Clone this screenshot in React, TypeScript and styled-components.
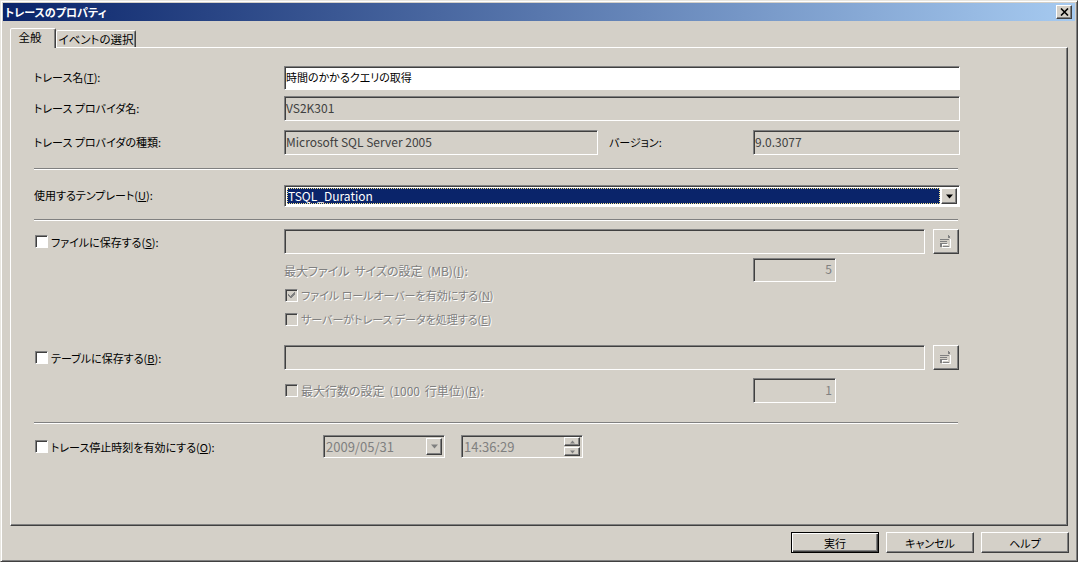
import React from "react";
import styled, { createGlobalStyle, css } from "styled-components";

const Global = createGlobalStyle`
  html, body { margin: 0; padding: 0; background: #d4d0c8; overflow: hidden; }
  body { font-family: "Noto Sans CJK JP", "Liberation Sans", sans-serif; font-size: 11px; color: #000; font-feature-settings: "palt"; }
`;

const raised = css`
  background: #d4d0c8;
  border-style: solid;
  border-width: 1px;
  border-color: #fff #404040 #404040 #fff;
  box-shadow: inset -1px -1px 0 #808080;
`;

const sunken = css`
  box-sizing: border-box;
  border-style: solid;
  border-width: 1px;
  border-color: #808080 #fff #fff #808080;
  box-shadow: inset 1px 1px 0 #404040;
`;

const Window = styled.div`
  box-sizing: border-box;
  width: 1078px;
  height: 562px;
  display: flex;
  flex-direction: column;
  padding: 2px 2px 1px 2px;
  background: #d4d0c8;
  border-style: solid;
  border-width: 1px;
  border-color: #e8e6e0 #404040 #404040 #e8e6e0;
  box-shadow: inset 1px 1px 0 #fff, inset -1px -1px 0 #808080;
`;

const TitleBar = styled.div`
  height: 18px;
  display: flex;
  align-items: center;
  justify-content: space-between;
  padding: 0 3px 0 2px;
  background: linear-gradient(90deg, #0a246a, #a6caf0);
  color: #fff;
  font-weight: 700;
  font-size: 11px;
  flex: none;
`;

const CloseButton = styled.div`
  ${raised}
  box-sizing: border-box;
  width: 16px;
  height: 14px;
  display: flex;
  align-items: center;
  justify-content: center;
  svg { display: block; }
`;

const Body = styled.div`
  flex: 1;
  display: flex;
  flex-direction: column;
  padding: 6px 6px 0 7px;
  min-height: 0;
`;

const TabStrip = styled.div`
  height: 20px;
  display: flex;
  align-items: flex-end;
  flex: none;
  position: relative;
  z-index: 1;
`;

const Tab = styled.div<{ $active?: boolean }>`
  box-sizing: border-box;
  display: flex;
  align-items: center;
  justify-content: center;
  white-space: nowrap;
  font-size: 11.5px;
  background: #d4d0c8;
  border-style: solid;
  border-color: #fff #404040 transparent #fff;
  border-width: 1px 1px 0 1px;
  border-radius: 2px 2px 0 0;
  box-shadow: inset -1px 0 0 #808080;
  width: ${(p) => (p.$active ? "46px" : "80px")};
  height: ${(p) => (p.$active ? "20px" : "17px")};
  margin-bottom: ${(p) => (p.$active ? "-1px" : "0")};
  padding: ${(p) => (p.$active ? "0 6px 3px 0" : "0")};
`;

const Panel = styled.div`
  box-sizing: border-box;
  height: 479px;
  width: 1058px;
  flex: none;
  padding: 18px 0 0 23px;
  border-style: solid;
  border-width: 1px;
  border-color: #fff #404040 #404040 #fff;
  box-shadow: inset -1px -1px 0 #808080;
`;

const Row = styled.div<{ $h: number; $top: number; $indent?: number }>`
  display: flex;
  align-items: center;
  height: ${(p) => p.$h}px;
  margin-top: ${(p) => p.$top}px;
  padding-left: ${(p) => p.$indent ?? 0}px;
`;

const Label = styled.span`
  width: 250px;
  flex: none;
  white-space: nowrap;
  position: relative;
  top: -1px;
`;

const CheckRowLabel = styled.label<{ $w?: number }>`
  width: ${(p) => p.$w ?? 250}px;
  flex: none;
  display: flex;
  align-items: center;
  gap: 3px;
  white-space: nowrap;
`;

const Box = styled.span<{ $disabled?: boolean }>`
  ${sunken}
  width: 13px;
  height: 13px;
  flex: none;
  margin-left: 1px;
  background: ${(p) => (p.$disabled ? "#d4d0c8" : "#fff")};
  display: flex;
  align-items: center;
  justify-content: center;
`;

const Field = styled.div<{ $w: number; $h?: number; $white?: boolean }>`
  ${sunken}
  width: ${(p) => p.$w}px;
  height: ${(p) => p.$h ?? 25}px;
  flex: none;
  padding: 2px 2px 5px 1px;
  display: flex;
  align-items: center;
  font-size: ${(p) => (p.$white ? "11px" : "12px")};
  background: ${(p) => (p.$white ? "#fff" : "#d4d0c8")};
  color: ${(p) => (p.$white ? "#000" : "#404040")};
  white-space: nowrap;
  overflow: hidden;
`;

const NumberField = styled(Field)`
  justify-content: flex-end;
  padding: 0 3px 3px 0;
  color: #808080;
`;

const Rule = styled.div<{ $top: number }>`
  height: 1px;
  width: 924px;
  margin-top: ${(p) => p.$top}px;
  background: #808080;
  border-bottom: 1px solid #fff;
`;

const SelectField = styled.div`
  ${sunken}
  width: 676px;
  height: 22px;
  flex: none;
  background: #fff;
  display: flex;
  padding: 2px;
  gap: 1px;
`;

const SelectedValue = styled.div`
  flex: 1;
  background: #0a246a;
  color: #fff;
  font-size: 12px;
  outline: 1px dotted #f6e58d;
  outline-offset: -1px;
  padding: 0 0 1px 1px;
  display: flex;
  align-items: center;
`;

const ArrowButton = styled.div`
  ${raised}
  box-sizing: border-box;
  width: 16px;
  flex: none;
  display: flex;
  align-items: center;
  justify-content: center;
`;

const DisabledText = styled.span`
  color: #808080;
  text-shadow: 1px 1px 0 #fff;
  white-space: nowrap;
`;

const LatinDisabledText = styled(DisabledText)`
  font-size: 12px;
  word-spacing: 2px;
`;

const IndentedLabel = styled(LatinDisabledText)`
  width: 469px;
  flex: none;
`;

const Gap = styled.span`
  width: 11px;
  flex: none;
`;

const VersionLabel = styled.span`
  width: 144px;
  flex: none;
  white-space: nowrap;
  position: relative;
  top: -1px;
`;

const BrowseButton = styled.div`
  ${raised}
  box-sizing: border-box;
  width: 26px;
  height: 25px;
  margin-left: 8px;
  flex: none;
  display: flex;
  align-items: center;
  justify-content: center;
`;

const Combo = styled.div`
  ${sunken}
  width: 122px;
  height: 23px;
  margin-left: 39px;
  flex: none;
  display: flex;
  align-items: center;
  justify-content: space-between;
  padding: 2px;
  color: #808080;
  font-size: 13px;
`;

const ComboArrow = styled(ArrowButton)`
  height: 17px;
`;

const TimeField = styled(Combo)`
  margin-left: 16px;
`;

const Spinner = styled.div`
  width: 16px;
  display: flex;
  flex-direction: column;
  gap: 1px;
`;

const SpinButton = styled.div`
  ${raised}
  box-sizing: border-box;
  height: 9px;
  display: flex;
  align-items: center;
  justify-content: center;
`;

const Footer = styled.div`
  display: flex;
  justify-content: flex-end;
  gap: 7px;
  padding: 6px 0 0 0;
`;

const DialogButton = styled.div<{ $default?: boolean }>`
  box-sizing: border-box;
  width: 88px;
  height: 21px;
  display: flex;
  align-items: center;
  justify-content: center;
  background: #d4d0c8;
  border-style: solid;
  border-width: 1px;
  border-color: ${(p) => (p.$default ? "#000" : "#fff #404040 #404040 #fff")};
  box-shadow: ${(p) =>
    p.$default
      ? "inset 1px 1px 0 #fff, inset -1px -1px 0 #404040, inset -2px -2px 0 #808080"
      : "inset -1px -1px 0 #808080"};
`;

const Tri = ({ dir, color = "#000", size = 7 }: { dir: "up" | "down"; color?: string; size?: number }) => (
  <svg width={size} height={Math.ceil(size / 2) + 1} viewBox="0 0 7 4">
    <polygon points={dir === "down" ? "0,0 7,0 3.5,4" : "0,4 7,4 3.5,0"} fill={color} />
  </svg>
);

const BrowseIcon = () => (
  <svg width="12" height="14" viewBox="0 0 12 14" shapeRendering="crispEdges">
    <path d="M8 0h1v1h1v2H8z" fill="#808080" />
    <path d="M0 4h9v1H0zM0 6h7v1H0zM0 8h2v4H0zM2 8h5v1H2zM3 11h6v1H3z" fill="#808080" />
    <path d="M10 4h1v9H2v-1h8zM2 9h6v1H3v1H2z" fill="#fff" />
  </svg>
);

const Check = () => (
  <svg width="9" height="9" viewBox="0 0 9 9" shapeRendering="crispEdges">
    <path d="M1 3h1v1h1v1h1V4h1V3h1V2h1V1h1v3H7v1H6v1H5v1H3V6H2V5H1z" fill="#808080" />
  </svg>
);

const U = styled.span`
  text-decoration: underline;
`;

export default function App() {
  return (
    <Window>
      <Global />
      <TitleBar>
        <span>トレースのプロパティ</span>
        <CloseButton>
          <svg width="9" height="8" viewBox="0 0 9 8">
            <path d="M1 0.5L8 7.5M8 0.5L1 7.5" stroke="#000" strokeWidth="1.6" />
          </svg>
        </CloseButton>
      </TitleBar>
      <Body>
        <TabStrip>
          <Tab $active>全般</Tab>
          <Tab>イベントの選択</Tab>
        </TabStrip>
        <Panel>
          <Row $h={24} $top={0}>
            <Label>トレース名(<U>T</U>):</Label>
            <Field $w={676} $h={24} $white>時間のかかるクエリの取得</Field>
          </Row>
          <Row $h={25} $top={6}>
            <Label>トレース プロバイダ名:</Label>
            <Field $w={676}>VS2K301</Field>
          </Row>
          <Row $h={25} $top={9}>
            <Label>トレース プロバイダの種類:</Label>
            <Field $w={314}>Microsoft SQL Server 2005</Field>
            <Gap />
            <VersionLabel>バージョン:</VersionLabel>
            <Field $w={207}>9.0.3077</Field>
          </Row>
          <Rule $top={13} />
          <Row $h={22} $top={15}>
            <Label>使用するテンプレート(<U>U</U>):</Label>
            <SelectField>
              <SelectedValue>TSQL_Duration</SelectedValue>
              <ArrowButton><Tri dir="down" /></ArrowButton>
            </SelectField>
          </Row>
          <Rule $top={12} />
          <Row $h={25} $top={8}>
            <CheckRowLabel><Box /><span>ファイルに保存する(<U>S</U>):</span></CheckRowLabel>
            <Field $w={641} />
            <BrowseButton><BrowseIcon /></BrowseButton>
          </Row>
          <Row $h={24} $top={4} $indent={250}>
            <IndentedLabel>最大ファイル サイズの設定 (MB)(<U>I</U>):</IndentedLabel>
            <NumberField $w={83} $h={24}>5</NumberField>
          </Row>
          <Row $h={16} $top={5} $indent={250}>
            <CheckRowLabel>
              <Box $disabled><Check /></Box>
              <DisabledText>ファイル ロールオーバーを有効にする(<U>N</U>)</DisabledText>
            </CheckRowLabel>
          </Row>
          <Row $h={16} $top={8} $indent={250}>
            <CheckRowLabel>
              <Box $disabled />
              <DisabledText>サーバーがトレース データを処理する(<U>E</U>)</DisabledText>
            </CheckRowLabel>
          </Row>
          <Row $h={25} $top={18}>
            <CheckRowLabel><Box /><span>テーブルに保存する(<U>B</U>):</span></CheckRowLabel>
            <Field $w={641} />
            <BrowseButton><BrowseIcon /></BrowseButton>
          </Row>
          <Row $h={25} $top={8} $indent={250}>
            <CheckRowLabel $w={469}>
              <Box $disabled />
              <LatinDisabledText>最大行数の設定 (1000 行単位)(<U>R</U>):</LatinDisabledText>
            </CheckRowLabel>
            <NumberField $w={83}>1</NumberField>
          </Row>
          <Rule $top={19} />
          <Row $h={23} $top={11}>
            <CheckRowLabel>
              <Box /><span>トレース停止時刻を有効にする(<U>O</U>):</span>
            </CheckRowLabel>
            <Combo>
              <span>2009/05/31</span>
              <ComboArrow><Tri dir="down" color="#808080" /></ComboArrow>
            </Combo>
            <TimeField>
              <span>14:36:29</span>
              <Spinner>
                <SpinButton><Tri dir="up" color="#808080" size={5} /></SpinButton>
                <SpinButton><Tri dir="down" color="#808080" size={5} /></SpinButton>
              </Spinner>
            </TimeField>
          </Row>
        </Panel>
        <Footer>
          <DialogButton $default>実行</DialogButton>
          <DialogButton>キャンセル</DialogButton>
          <DialogButton>ヘルプ</DialogButton>
        </Footer>
      </Body>
    </Window>
  );
}
